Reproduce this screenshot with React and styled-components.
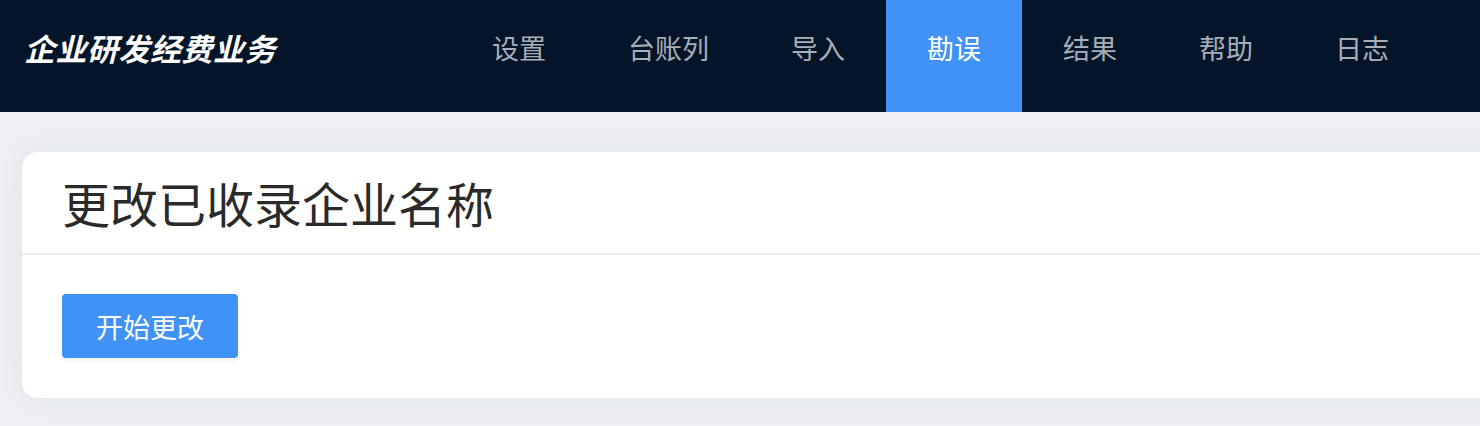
import React from 'react';
import styled, { createGlobalStyle } from 'styled-components';

const GlobalStyle = createGlobalStyle`
  html, body {
    margin: 0;
    padding: 0;
    overflow: hidden;
  }
  body {
    font-family: 'Noto Sans CJK SC', 'Noto Sans', sans-serif;
    background: #eef0f4;
  }
`;

const Page = styled.div`
  min-height: 426px;
  background: #eef0f4;
`;

// top bar with logo and tabs
const TopBar = styled.header`
  display: flex;
  align-items: flex-start;
  justify-content: space-between;
  height: 112px;
  background: #041529;
  padding: 0 50px 0 24px;
`;

const Logo = styled.div`
  color: #ffffff;
  font-size: 31px;
  font-weight: 700;
  font-style: italic;
  line-height: 96px;
  letter-spacing: 0.5px;
`;

const Nav = styled.nav`
  display: flex;
  height: 112px;
`;

const Tab = styled.a`
  display: block;
  height: 112px;
  box-sizing: border-box;
  padding: 0 41px 16px;
  line-height: 96px;
  font-size: 27px;
  text-decoration: none;
  color: ${p => (p.$active ? '#ffffff' : '#a7aeb6')};
  background: ${p => (p.$active ? '#4092f7' : 'transparent')};
  cursor: pointer;
`;

const Main = styled.main`
  padding: 40px 0 28px 22px;
`;

const Card = styled.section`
  margin-right: -40px;
  background: #ffffff;
  border-radius: 16px;
  box-shadow: 0 0 40px rgba(30, 40, 60, 0.07);
  overflow: hidden;
`;

const CardTitle = styled.h2`
  margin: 0;
  padding: 0 40px;
  height: 101px;
  line-height: 101px;
  font-size: 48px;
  font-weight: 400;
  color: #2a2a2a;
  border-bottom: 2px solid #ececec;
`;

const CardBody = styled.div`
  padding: 39px 40px 40px;
`;

const Button = styled.button`
  width: 176px;
  height: 64px;
  border: none;
  border-radius: 4px;
  background: #4092f7;
  color: #ffffff;
  font-family: 'Noto Sans CJK SC', 'Noto Sans', sans-serif;
  font-size: 27px;
  box-shadow: 0 4px 0 rgba(0, 0, 0, 0.03);
  cursor: pointer;
`;

const tabs = ['设置', '台账列', '导入', '勘误', '结果', '帮助', '日志'];

const App = () => (
  <Page>
    <GlobalStyle />
    <TopBar>
      <Logo>企业研发经费业务</Logo>
      <Nav>
        {tabs.map(t => (
          <Tab key={t} $active={t === '勘误'}>{t}</Tab>
        ))}
      </Nav>
    </TopBar>
    <Main>
      <Card>
        <CardTitle>更改已收录企业名称</CardTitle>
        <CardBody>
          <Button>开始更改</Button>
        </CardBody>
      </Card>
    </Main>
  </Page>
);

export default App;
